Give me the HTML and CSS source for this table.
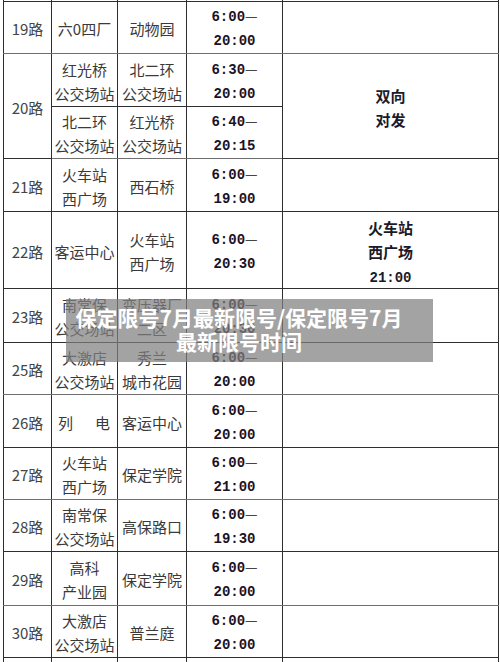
FILE: index.html
```html
<!DOCTYPE html>
<html lang="zh-CN">
<head>
<meta charset="utf-8">
<title>保定限号7月最新限号</title>
<link rel="stylesheet" href="styles.css">
</head>
<body>
<div class="page">
  <table class="sched">
    <colgroup>
      <col class="c1"><col class="c2"><col class="c3"><col class="c4"><col class="c5">
    </colgroup>
    <tbody>
      <tr class="cut"><td></td><td></td><td></td><td></td><td></td></tr>
      <tr class="h52 gb">
        <td class="route">19路</td><td>六0四厂</td><td>动物园</td>
        <td class="time">6:00<span class="dash">—</span><br>20:00</td><td></td>
      </tr>
      <tr class="h53">
        <td class="route" rowspan="2">20路</td><td>红光桥<br>公交场站</td><td>北二环<br>公交场站</td>
        <td class="time">6:30<span class="dash">—</span><br>20:00</td>
        <td class="note" rowspan="2">双向<br>对发</td>
      </tr>
      <tr class="h52 gb">
        <td>北二环<br>公交场站</td><td>红光桥<br>公交场站</td>
        <td class="time">6:40<span class="dash">—</span><br>20:15</td>
      </tr>
      <tr class="h53">
        <td class="route">21路</td><td>火车站<br>西广场</td><td>西石桥</td>
        <td class="time">6:00<span class="dash">—</span><br>19:00</td><td></td>
      </tr>
      <tr class="h77">
        <td class="route">22路</td><td>客运中心</td><td>火车站<br>西广场</td>
        <td class="time">6:00<span class="dash">—</span><br>20:30</td>
        <td class="note">火车站<br>西广场<br><span class="num">21:00</span></td>
      </tr>
      <tr class="h54">
        <td class="route">23路</td><td>南常保<br>公交场站</td><td>变压器厂<br>二区</td>
        <td class="time">6:00<span class="dash">—</span><br>20:30</td><td></td>
      </tr>
      <tr class="h52 gb">
        <td class="route">25路</td><td>大激店<br>公交场站</td><td>秀兰<br>城市花园</td>
        <td class="time">6:00<span class="dash">—</span><br>20:00</td><td></td>
      </tr>
      <tr class="h53">
        <td class="route">26路</td><td><span class="spread"><span>列</span><span>电</span></span></td><td>客运中心</td>
        <td class="time">6:00<span class="dash">—</span><br>20:00</td><td></td>
      </tr>
      <tr class="h52 gb">
        <td class="route">27路</td><td>火车站<br>西广场</td><td>保定学院</td>
        <td class="time">6:00<span class="dash">—</span><br>21:00</td><td></td>
      </tr>
      <tr class="h52">
        <td class="route">28路</td><td>南常保<br>公交场站</td><td>高保路口</td>
        <td class="time">6:00<span class="dash">—</span><br>19:30</td><td></td>
      </tr>
      <tr class="h54 gb">
        <td class="route">29路</td><td>高科<br>产业园</td><td>保定学院</td>
        <td class="time">6:00<span class="dash">—</span><br>20:00</td><td></td>
      </tr>
      <tr class="h51">
        <td class="route">30路</td><td>大激店<br>公交场站</td><td>普兰庭</td>
        <td class="time">6:00<span class="dash">—</span><br>20:00</td><td></td>
      </tr>
      <tr class="h52">
        <td class="route"></td><td></td><td></td><td></td><td></td>
      </tr>
    </tbody>
  </table>
  <div class="banner">保定限号7月最新限号/保定限号7月<br>最新限号时间</div>
</div>
</body>
</html>
```

FILE: styles.css
```css
html, body {
  margin: 0;
  padding: 0;
  background: #fff;
  overflow: hidden;
}

.page {
  position: relative;
  width: 500px;
  height: 662px;
  overflow: hidden;
  padding-left: 3px;
  box-sizing: border-box;
}

.sched {
  border-collapse: collapse;
  table-layout: fixed;
  width: 495px;
  margin-top: -1px;
  font-family: "Noto Sans CJK SC", "Noto Sans", sans-serif;
  font-size: 15px;
  line-height: 24px;
  color: #3a3a3a;
}

.c1 { width: 48px; }
.c2 { width: 66px; }
.c3 { width: 69px; }
.c4 { width: 96px; }
.c5 { width: 216px; }

.sched td {
  border: 1px solid #2e2e2e;
  padding: 3px 0 0;
  text-align: center;
  vertical-align: middle;
  white-space: nowrap;
  overflow: hidden;
}

.sched tr.cut td {
  border-top: none;
  padding: 0;
  height: 2px;
}

.h51 { height: 51px; }
.h52 { height: 52px; }
.h53 { height: 53px; }
.h54 { height: 54px; }
.h77 { height: 77px; }

.sched tr.gb td {
  border-bottom-color: #6e6e6e;
}

.route {
  font-size: 15px;
  color: #444;
}

.time {
  font-family: "Liberation Mono", "DejaVu Sans Mono", monospace;
  font-weight: bold;
  font-size: 14px;
  line-height: 24px;
  color: #1c1226;
}

.dash {
  font-family: "Noto Sans CJK SC", sans-serif;
  font-weight: normal;
  line-height: 1;
  color: #444;
}

.note {
  font-weight: bold;
  font-size: 15px;
  color: #1a1a2a;
}

.num {
  font-family: "Liberation Mono", "DejaVu Sans Mono", monospace;
  font-size: 14px;
  line-height: 1;
}

.spread {
  display: flex;
  justify-content: space-between;
  padding: 0 7px 0 6px;
}

.banner {
  position: absolute;
  left: 66px;
  top: 299px;
  width: 367px;
  height: 63px;
  box-sizing: border-box;
  padding: 6px 30px 0 9px;
  background: rgba(128, 128, 128, 0.72);
  color: #fff;
  font-family: "Noto Sans CJK SC", "Noto Sans", sans-serif;
  font-weight: bold;
  font-size: 21px;
  line-height: 24px;
  text-align: center;
  white-space: nowrap;
}
```
